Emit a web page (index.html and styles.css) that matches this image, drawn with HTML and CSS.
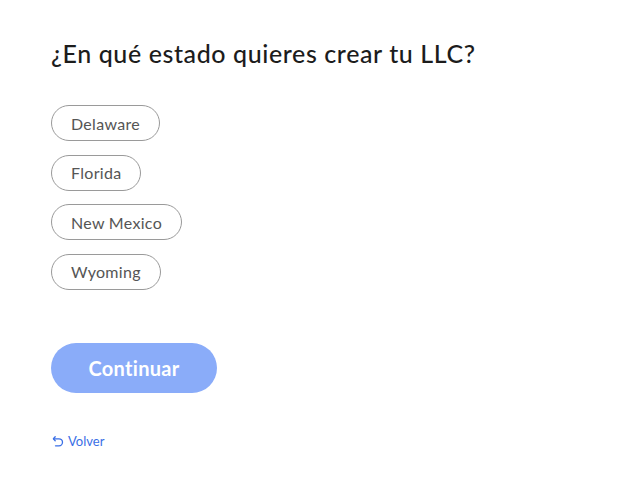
FILE: index.html
```html
<!DOCTYPE html>
<html lang="es">
<head>
<meta charset="utf-8">
<title>LLC</title>
<link rel="stylesheet" href="styles.css">
</head>
<body>
<main class="page">
  <h1 class="title">¿En qué estado quieres crear tu LLC?</h1>
  <div class="options">
    <button class="pill">Delaware</button>
    <button class="pill">Florida</button>
    <button class="pill">New Mexico</button>
    <button class="pill">Wyoming</button>
  </div>
  <button class="cta">Continuar</button>
  <a class="back" href="#">
    <svg class="back-icon" viewBox="0 0 12 12" width="12" height="12" aria-hidden="true">
      <path d="M3.2 1.8 L1.4 3.8 L3.2 5.8" fill="none" stroke="currentColor" stroke-width="1.3" stroke-linecap="round" stroke-linejoin="round"/>
      <path d="M1.6 3.8 H7 A3.5 3.5 0 0 1 7 10.8 H3.5" fill="none" stroke="currentColor" stroke-width="1.3" stroke-linecap="round"/>
    </svg>
    <span>Volver</span>
  </a>
</main>
</body>
</html>
```
FILE: styles.css
```css
html, body {
  margin: 0;
  background: #ffffff;
}
.page {
  padding: 37px 0 0 51px;
  font-family: "Lato", "Noto Sans", sans-serif;
  display: flex;
  flex-direction: column;
  align-items: flex-start;
}
.title {
  margin: 0;
  font-size: 25px;
  font-weight: 500;
  color: #1c1c1c;
  letter-spacing: 0.6px;
  line-height: 32px;
}
.options {
  display: flex;
  flex-direction: column;
  align-items: flex-start;
  gap: 13.67px;
  margin-top: 36px;
}
.pill {
  font-family: inherit;
  font-size: 16px;
  color: #555555;
  background: #fff;
  border: 1px solid #9a9a9a;
  border-radius: 18px;
  height: 36px;
  padding: 0 19px;
  letter-spacing: 0.3px;
}
.cta {
  margin-top: 53px;
  font-family: inherit;
  font-size: 20px;
  font-weight: 700;
  color: #ffffff;
  background: #8aacf9;
  border: none;
  border-radius: 25px;
  width: 166px;
  height: 50px;
  letter-spacing: 0.3px;
}
.back {
  margin-top: 40px;
  display: flex;
  align-items: center;
  gap: 4px;
  color: #3a6fe6;
  text-decoration: none;
  font-size: 13px;
  margin-left: 1px;
}
.back-icon {
  display: block;
}
```
